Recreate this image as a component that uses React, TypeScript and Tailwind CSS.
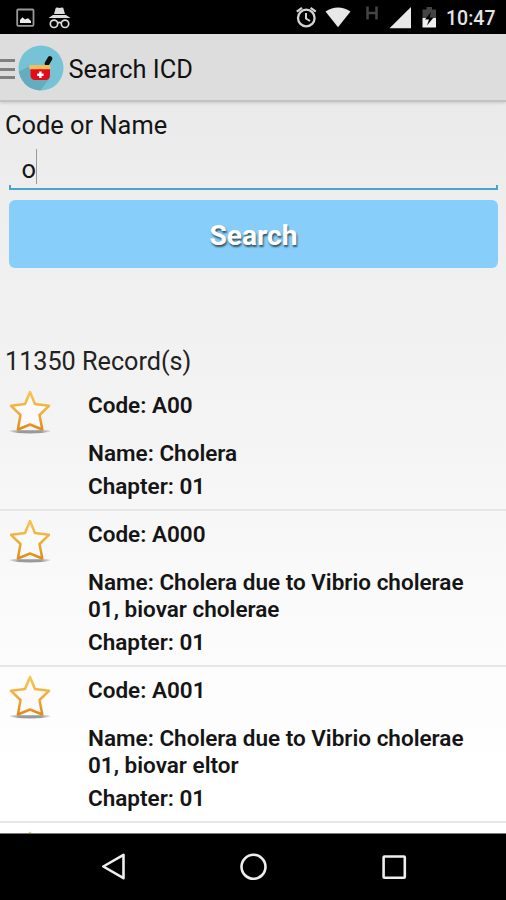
import React from "react";

type Entry = { code: string; name: string[]; chapter: string };

const entries: Entry[] = [
  { code: "A00", name: ["Name: Cholera"], chapter: "01" },
  { code: "A000", name: ["Name: Cholera due to Vibrio cholerae", "01, biovar cholerae"], chapter: "01" },
  { code: "A001", name: ["Name: Cholera due to Vibrio cholerae", "01, biovar eltor"], chapter: "01" },
];

function Star() {
  return (
    <svg className="block h-[48px] w-[44px]" viewBox="0 0 44 48" aria-hidden="true">
      <defs>
        <linearGradient id="gold" x1="0" y1="0" x2="0" y2="1">
          <stop offset="0" stopColor="#f8c451" />
          <stop offset="0.5" stopColor="#eeb03c" />
          <stop offset="1" stopColor="#e08c1c" />
        </linearGradient>
        <linearGradient id="shade" x1="0" y1="0" x2="1" y2="0">
          <stop offset="0" stopColor="#999" stopOpacity="0.2" />
          <stop offset="0.25" stopColor="#999" />
          <stop offset="0.75" stopColor="#999" />
          <stop offset="1" stopColor="#999" stopOpacity="0.2" />
        </linearGradient>
      </defs>
      <path d="M1 44.300 Q2 43.300 6 43.300 H38 Q42 43.300 43 44.300 Q36 46.500 22 46.500 Q8 46.500 1 44.300 Z" fill="url(#shade)" />
      <path d="M22 5 L27 17.1 L41 18.8 L31.500 28 L34.300 42.500 L22 37.500 L9.900 42.500 L12.500 28 L3 18.8 L17 17.1 Z" fill="#fafafa" stroke="url(#gold)" strokeWidth="2.500" strokeLinejoin="round" />
    </svg>
  );
}

function StatusBar() {
  return (
    <div className="flex h-[34px] shrink-0 items-center justify-between bg-black">
      <svg className="block h-[34px] w-[90px]" viewBox="0 0 90 34" aria-hidden="true">
        <rect x="17.2" y="9.500" width="16.300" height="16.300" rx="1" fill="none" stroke="#999" strokeWidth="1.8" />
        <path d="M20 23 V20 L22.5 17.3 L25 19.5 L28 18.3 L31 21 V23 Z" fill="#eee" />
        <path d="M54 14 L55.800 7.800 Q57.5 7 59.5 8 Q61.500 7 63.200 7.800 L65 14 Z" fill="#ddd" />
        <path d="M53 15 H66 L70.500 18 H48.500 Z" fill="#ddd" />
        <g fill="none" stroke="#ddd" strokeWidth="1.7">
          <circle cx="54" cy="23.800" r="3.700" />
          <circle cx="65" cy="23.800" r="3.700" />
          <path d="M57.700 23 Q59.500 21.800 61.300 23" />
        </g>
      </svg>
      <div className="flex h-[34px] items-center">
        <svg className="block h-[34px] w-[150px]" viewBox="290 0 150 34" aria-hidden="true">
          <g fill="none" stroke="#d4d4d4">
            <circle cx="306.300" cy="18" r="8.300" strokeWidth="2.300" />
            <path d="M306 13 V18.500 L310 21" strokeWidth="2" />
            <path d="M296.800 11.600 L302 7.800 M315.800 11.600 L310.600 7.800" strokeWidth="2.200" />
          </g>
          <path d="M325.500 11.500 Q338 3.500 350.500 11.500 L338 27.300 Z" fill="#e8e8e8" />
          <path d="M367.500 6.500 V19.500 M376.500 6.500 V19.500 M367 13 H376.500" stroke="#444" strokeWidth="2.500" fill="none" />
          <path d="M389.500 28.300 L411 7 V28.300 Z" fill="#e8e8e8" />
          <path d="M422.500 9.500 H426.500 V7 H432 V9.500 H436 V18 H422.500 Z" fill="#444" />
          <path d="M422.500 18 H436 V27.500 H422.500 Z" fill="#f0f0f0" />
          <path d="M431 12 L425 19.500 H429 L427 25.500 L433.500 17.500 H429.500 Z" fill="#000" />
        </svg>
        <div className="w-[66px] pt-[4px] pl-[6px] text-[19.5px] leading-none font-medium text-[#e4e4e4]">10:47</div>
      </div>
    </div>
  );
}

function ActionBar() {
  return (
    <header className="flex h-[68px] shrink-0 items-center border-b-2 border-[#c2c2c2] bg-[#dddddd] pt-[2px] shadow-[0_1px_3px_rgba(0,0,0,0.15)]">
      <div className="flex w-[14.5px] flex-col gap-[5.500px] pt-[2px]">
        <span className="h-[3px] bg-[#808080]" />
        <span className="h-[3px] bg-[#808080]" />
        <span className="h-[3px] bg-[#808080]" />
      </div>
      <svg className="ml-[3px] block h-[46px] w-[46px]" viewBox="0 0 46 46" aria-hidden="true">
        <defs>
          <clipPath id="disc"><circle cx="23" cy="23" r="22.500" /></clipPath>
        </defs>
        <circle cx="23" cy="23" r="22.500" fill="#74c3d6" />
        <path d="M0 27 L13 20.500 L31 34 L22 46 H0 Z" fill="#64adc0" clipPath="url(#disc)" />
        <path d="M29 18.500 L32 13.500" stroke="#111" strokeWidth="4.800" strokeLinecap="round" />
        <path d="M12.500 23 H32 V30 Q32 35 27.500 35 H17 Q12.500 35 12.500 30 Z" fill="#e20d18" />
        <rect x="11.200" y="20" width="21.500" height="4.300" rx="1.300" fill="#f3bd59" />
        <path d="M22.400 26.500 V33 M19.200 29.700 H25.600" stroke="#fff" strokeWidth="2.400" />
      </svg>
      <h1 className="ml-[5px] pt-[4px] text-[25.400px] leading-none text-[#111]">Search ICD</h1>
    </header>
  );
}

function Row({ entry }: { entry: Entry }) {
  return (
    <li className="flex shrink-0 border-b-2 border-[#e6e6e6] pl-[8px]">
      <div className="w-[80px] pt-[5px]"><Star /></div>
      <div className="pt-[10px] pb-[9px] text-[22.500px] leading-[27px] font-semibold whitespace-nowrap text-[#151515]">
        <p>Code: {entry.code}</p>
        <div className="pt-[21px]">
          {entry.name.map((line) => <p key={line}>{line}</p>)}
        </div>
        <p className="pt-[6px]">Chapter: {entry.chapter}</p>
      </div>
    </li>
  );
}

function NavBar() {
  return (
    <nav className="flex h-[67px] shrink-0 items-center justify-center border-t border-[#777] bg-black">
      <svg className="block h-[66px] w-[506px]" viewBox="0 834 506 66" fill="none" stroke="#eee" strokeWidth="2.600" strokeLinejoin="round" aria-hidden="true">
        <path d="M123.500 854.800 V878.200 L103.300 866.500 Z" />
        <circle cx="253.500" cy="866.800" r="12" />
        <rect x="383.600" y="856.500" width="21.200" height="21.200" rx="0.800" />
      </svg>
    </nav>
  );
}

export default function App() {
  return (
    <div className="flex h-[900px] w-[506px] flex-col overflow-hidden bg-[linear-gradient(#eaeaea_100px,#eeeeee_200px,#f3f3f3_400px,#fafafa_600px,#ffffff_780px)] font-[Roboto,sans-serif]">
      <StatusBar />
      <ActionBar />
      <main className="flex h-[731px] shrink-0 flex-col overflow-hidden">
        <label className="pt-[8px] pl-[5px] text-[25.400px] leading-[30px] text-[#151515]">Code or Name</label>
        <div className="mr-[8px] ml-[9px] mt-[8px] flex h-[42px] flex-col justify-end">
          <div className="flex h-[37px] items-center pl-[12.500px] text-[25.400px] leading-none text-[#151515]">
            <span className="pt-[7px]">o</span>
            <span className="h-[35px] w-[1.500px] bg-[#999]" />
          </div>
          <div className="h-[5px] shrink-0 border-x-2 border-b-2 border-[#4ba3cf]" />
        </div>
        <button className="mr-[8px] ml-[9px] mt-[10px] h-[68px] shrink-0 rounded-[6px] bg-[#87cefa] pt-[4px] text-[28.200px] leading-none font-bold text-white [text-shadow:1px_2px_2px_rgba(0,0,0,0.6)]">Search</button>
        <p className="pt-[79px] pl-[5px] text-[25.200px] leading-[30px] text-[#222]">11350 Record(s)</p>
        <ul className="mt-[5px] flex flex-col">
          {entries.map((entry) => <Row key={entry.code} entry={entry} />)}
          <li className="shrink-0 pt-[5px] pl-[8px]"><Star /></li>
        </ul>
      </main>
      <NavBar />
    </div>
  );
}
